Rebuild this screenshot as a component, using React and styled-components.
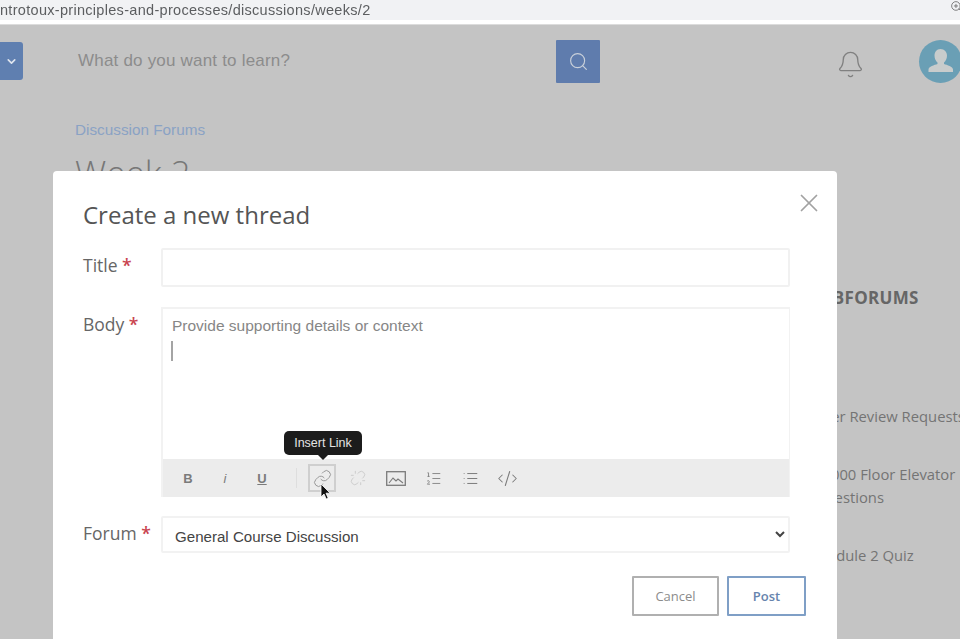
import styled, { createGlobalStyle } from "styled-components";
import {
  Search,
  Bell,
  X,
  ChevronDown,
  Link,
  Unlink,
  ListOrdered,
  List,
  CodeXml,
  ZoomIn,
} from "lucide-react";

const GlobalStyle = createGlobalStyle`
  html, body {
    margin: 0;
    padding: 0;
    background: #c4c4c4;
    font-family: "Open Sans", sans-serif;
  }
`;

const Screen = styled.div`
  width: 960px;
  height: 639px;
  overflow: hidden;
  display: flex;
  flex-direction: column;
  filter: blur(0.5px);
`;

const UrlBar = styled.div`
  height: 20px;
  flex: none;
  background: #f1f2f4;
  display: flex;
  align-items: center;
  justify-content: space-between;
  overflow: hidden;
  color: #5c5e60;
  font: 14.5px/20px "Liberation Sans", sans-serif;
  letter-spacing: 0.3px;
  box-shadow: 0 4px 0 #fff;
  z-index: 1;

  svg {
    margin: -7px -3px 0 0;
  }
`;

const Page = styled.div`
  position: relative;
  flex: 1;
  margin-top: 4px;
  border-top: 1px solid #dcdcdc;
  background: #c4c4c4;
  overflow: hidden;
`;

const TopBar = styled.div`
  height: 72px;
  display: flex;
  align-items: center;

  & > * {
    flex: none;
  }
`;

const MenuButton = styled.div`
  width: 23px;
  height: 38px;
  background: #5f7fb0;
  border-radius: 0 3px 3px 0;
  display: flex;
  align-items: center;
  justify-content: center;
  color: #dfe5ee;
`;

const SearchText = styled.div`
  width: 478px;
  margin-left: 55px;
  color: #8c8c8c;
  font: 300 17px "Liberation Sans", sans-serif;
  letter-spacing: 0.2px;
`;

const SearchButton = styled.div`
  width: 44px;
  height: 43px;
  background: #5f7cad;
  border-radius: 1px;
  display: flex;
  align-items: center;
  justify-content: center;
  color: #c9d0da;
`;

const BellIcon = styled(Bell)`
  margin-left: 236px;
  margin-top: 6px;
  color: #808080;
`;

const Avatar = styled.div`
  width: 43px;
  height: 43px;
  margin-left: 54px;
  border-radius: 50%;
  background: #6a9fb5;
  overflow: hidden;
`;

const Columns = styled.div`
  display: flex;
  justify-content: space-between;
  padding: 23px 0 0 75px;
`;

const Main = styled.div`
  color: #8c8c8c;
`;

const Crumb = styled.div`
  color: #8aa2c4;
  font: 15.300px/20px "Liberation Sans", sans-serif;
`;

const WeekTitle = styled.div`
  margin-top: 10px;
  color: #777;
  font: 300 35px/46px "Open Sans", sans-serif;
`;

const Side = styled.div`
  width: 250px;
  flex: none;
  margin-right: -104px;
  padding-top: 166px;
  color: #747474;
  font-size: 14.800px;
  line-height: 23px;
`;

const SideHead = styled.div`
  color: #666;
  font-size: 17px;
  font-weight: 700;
  letter-spacing: 0.3px;
  margin-bottom: 96px;
  margin-left: -4px;
`;

const SideItem = styled.div`
  margin-bottom: 35px;
`;

const Modal = styled.div`
  position: absolute;
  left: 53px;
  top: 146px;
  width: 784px;
  height: 500px;
  box-sizing: border-box;
  padding: 28px 30px 0;
  background: #fff;
  border-radius: 4px 4px 0 0;
  color: #666;
`;

const CloseButton = styled(X)`
  position: absolute;
  top: 17px;
  right: 13px;
  color: #a2a2a2;
`;

const ModalTitle = styled.h2`
  margin: 0 0 17px;
  color: #555;
  font-size: 24px;
  font-weight: 400;
  line-height: 32px;
`;

const FormRow = styled.div`
  display: grid;
  grid-template-columns: 78px 629px;
  margin-bottom: ${(p) => p.$gap}px;
`;

const Label = styled.label`
  padding-top: ${(p) => p.$top}px;
  color: #666;
  font-size: 17.500px;
  line-height: 24px;

  b {
    color: #c9444f;
    font-weight: 600;
  }
`;

const TextInput = styled.input`
  box-sizing: border-box;
  width: 629px;
  height: 39px;
  border: 2px solid #f1f1f1;
  border-radius: 2px;
  outline: none;
`;

const Editor = styled.div`
  height: 190px;
  box-sizing: border-box;
  border: 2px solid #f2f2f2;
  border-bottom: 0;
  border-right-width: 1px;
  display: flex;
  flex-direction: column;
`;

const EditorBody = styled.div`
  flex: 1;
  padding: 7px 9px;
  color: #868686;
  font: 15.500px/20px "Liberation Sans", sans-serif;
`;

const Caret = styled.div`
  width: 2px;
  height: 20px;
  margin: 5px 0 0 -1px;
  background: #a4a4a4;
`;

const Toolbar = styled.div`
  position: relative;
  height: 38px;
  flex: none;
  background: #ececec;
  display: flex;
  align-items: center;
  padding-left: 11px;
  color: #7b7b7b;
`;

const ToolButton = styled.div`
  position: relative;
  box-sizing: border-box;
  width: 28px;
  height: 28px;
  margin-right: ${(p) => p.$gap ?? 9}px;
  display: flex;
  align-items: center;
  justify-content: center;
  font: ${(p) => p.$font || "700 13px"} "Liberation Sans", sans-serif;
  text-decoration: ${(p) => (p.$underline ? "underline" : "none")};
  color: ${(p) => (p.$muted ? "#c8c8c8" : "#7b7b7b")};
  border: ${(p) => (p.$active ? "2px solid #cfcfcf" : "0")};
`;

const Divider = styled.div`
  width: 1px;
  height: 20px;
  margin-right: 11px;
  background: #dedede;
`;

const Tooltip = styled.div`
  position: absolute;
  left: 121px;
  top: -28px;
  width: 78px;
  height: 24px;
  border-radius: 5px;
  background: #1c1c1c;
  color: #e4e4e4;
  font: 12.500px/24px "Liberation Sans", sans-serif;
  text-align: center;

  &::after {
    content: "";
    position: absolute;
    left: 34px;
    bottom: -5px;
    border: 5px solid transparent;
    border-bottom: 0;
    border-top-color: #1c1c1c;
  }
`;

const Cursor = styled.svg`
  position: absolute;
  left: 157px;
  top: 24px;
`;

const ForumSelect = styled.select`
  box-sizing: border-box;
  width: 629px;
  height: 37px;
  padding: 4px 0 0 8px;
  border: 2px solid #f2f2f2;
  border-radius: 2px;
  background: #fff;
  color: #444;
  font: 15.100px "Liberation Sans", sans-serif;
  outline: none;
`;

const Actions = styled.div`
  display: flex;
  justify-content: flex-end;
  gap: 8px;
  margin-right: 1px;
`;

const ActionButton = styled.button`
  box-sizing: border-box;
  width: ${(p) => p.$width}px;
  height: 40px;
  padding: 0;
  background: #fff;
  border: 2px solid ${(p) => (p.$primary ? "#7f9fc6" : "#b0b0b0")};
  border-radius: 1px;
  color: ${(p) => (p.$primary ? "#6684ad" : "#8c8c8c")};
  font: ${(p) => (p.$primary ? 600 : 400)} 13px "Open Sans", sans-serif;
`;

export default function App() {
  return (
    <>
      <GlobalStyle />
      <Screen>
        <UrlBar>
          <span>ntrotoux-principles-and-processes/discussions/weeks/2</span>
          <ZoomIn size={13} strokeWidth={1.5} color="#666" />
        </UrlBar>
        <Page>
          <TopBar>
            <MenuButton>
              <ChevronDown size={13} strokeWidth={3} />
            </MenuButton>
            <SearchText>What do you want to learn?</SearchText>
            <SearchButton>
              <Search size={21} strokeWidth={1.3} />
            </SearchButton>
            <BellIcon size={29} strokeWidth={1.1} />
            <Avatar>
              <svg width="43" height="43" viewBox="0 0 43 43">
                <path
                  d="M21.5 9c4 0 6.500 3 6.500 6.500 0 3-1.200 5.500-3 7v1.500c3 1 9 2.500 9 5.500v2.500H9.500V29.500c0-3 6-4.500 9-5.500v-1.500c-1.800-1.500-3-4-3-7C15.500 12 17.500 9 21.500 9z"
                  fill="#c8cccc"
                />
              </svg>
            </Avatar>
          </TopBar>
          <Columns>
            <Main>
              <Crumb>Discussion Forums</Crumb>
              <WeekTitle>Week 2</WeekTitle>
            </Main>
            <Side>
              <SideHead>SUBFORUMS</SideHead>
              <SideItem>Peer Review Requests</SideItem>
              <SideItem>
                10000 Floor Elevator
                <br />
                Questions
              </SideItem>
              <SideItem>Module 2 Quiz</SideItem>
            </Side>
          </Columns>
          <Modal>
            <CloseButton size={30} strokeWidth={1.4} />
            <ModalTitle>Create a new thread</ModalTitle>
            <FormRow $gap={20}>
              <Label $top={5}>
                Title <b>*</b>
              </Label>
              <TextInput type="text" />
            </FormRow>
            <FormRow $gap={19}>
              <Label $top={5}>
                Body <b>*</b>
              </Label>
              <Editor>
                <EditorBody>
                  Provide supporting details or context
                  <Caret />
                </EditorBody>
                <Toolbar>
                  <ToolButton>B</ToolButton>
                  <ToolButton $font="italic 400 13px">i</ToolButton>
                  <ToolButton $underline $gap={20}>
                    U
                  </ToolButton>
                  <Divider />
                  <ToolButton $active $gap={8}>
                    <Link size={19} strokeWidth={1.2} color="#949494" />
                  </ToolButton>
                  <ToolButton $muted $gap={10}>
                    <Unlink size={16} strokeWidth={1.3} />
                  </ToolButton>
                  <ToolButton>
                    <svg width="20" height="15" viewBox="0 0 20 15" fill="none" stroke="currentColor">
                      <rect x="0.7" y="0.7" width="18.6" height="13.6" strokeWidth="1.300" />
                      <path d="M3 12l4-5 3 3 2-2 5 4" strokeWidth="1.100" />
                    </svg>
                  </ToolButton>
                  <ToolButton>
                    <ListOrdered size={17} strokeWidth={1.2} />
                  </ToolButton>
                  <ToolButton>
                    <List size={17} strokeWidth={1.4} />
                  </ToolButton>
                  <ToolButton>
                    <CodeXml size={21} strokeWidth={1.2} />
                  </ToolButton>
                  <Tooltip>Insert Link</Tooltip>
                  <Cursor width="12" height="18" viewBox="0 0 12 18">
                    <path
                      d="M1 1v13l3-3 2.200 5 2-1-2.200-4.800h4.200z"
                      fill="#111"
                      stroke="#fff"
                      strokeWidth="0.8"
                    />
                  </Cursor>
                </Toolbar>
              </Editor>
            </FormRow>
            <FormRow $gap={23}>
              <Label $top={5}>
                Forum <b>*</b>
              </Label>
              <ForumSelect defaultValue="general">
                <option value="general">General Course Discussion</option>
              </ForumSelect>
            </FormRow>
            <Actions>
              <ActionButton $width={87}>Cancel</ActionButton>
              <ActionButton $width={79} $primary>
                Post
              </ActionButton>
            </Actions>
          </Modal>
        </Page>
      </Screen>
    </>
  );
}
